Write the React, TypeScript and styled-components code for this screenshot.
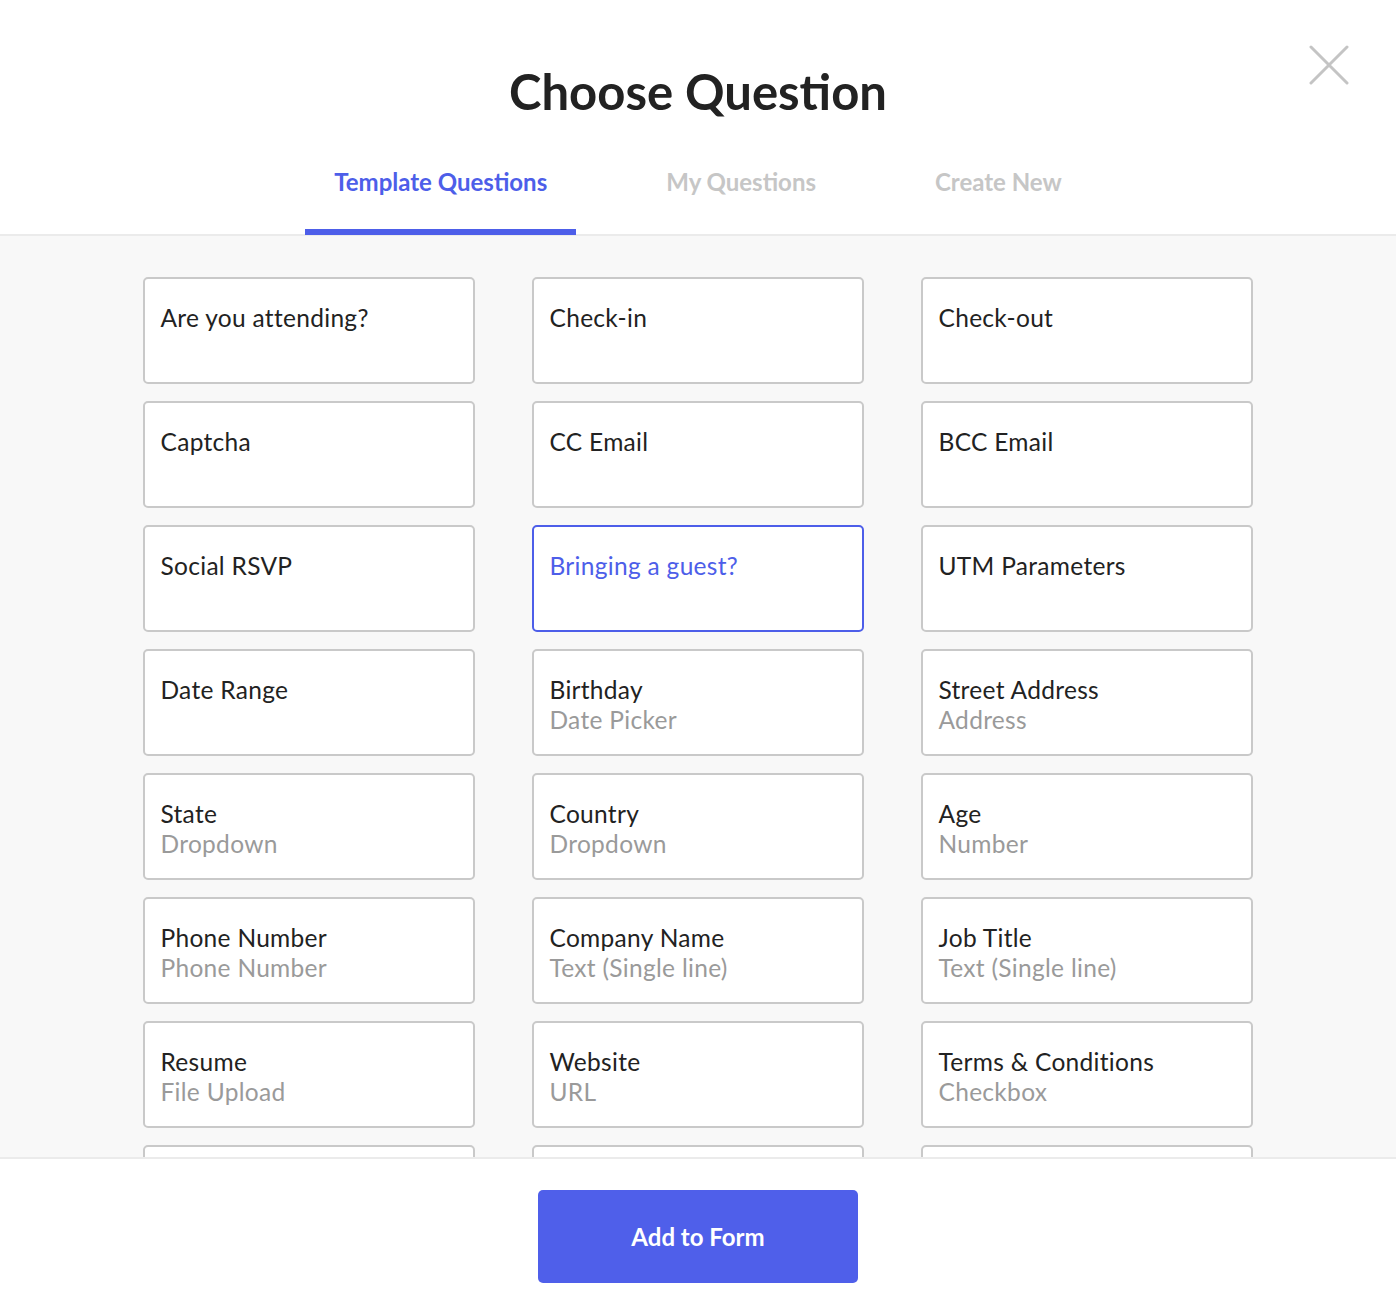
import * as React from 'react';
import styled, { createGlobalStyle } from 'styled-components';

const GlobalStyle = createGlobalStyle`
  html, body {
    margin: 0;
    padding: 0;
    background: #fff;
    font-family: Lato, "Open Sans", Arial, sans-serif;
    color: #222;
  }
  * { box-sizing: border-box; }
`;

interface IQuestion {
  title: string;
  type?: string;
}

const QUESTIONS: IQuestion[] = [
  { title: 'Are you attending?' },
  { title: 'Check-in' },
  { title: 'Check-out' },
  { title: 'Captcha' },
  { title: 'CC Email' },
  { title: 'BCC Email' },
  { title: 'Social RSVP' },
  { title: 'Bringing a guest?' },
  { title: 'UTM Parameters' },
  { title: 'Date Range' },
  { title: 'Birthday', type: 'Date Picker' },
  { title: 'Street Address', type: 'Address' },
  { title: 'State', type: 'Dropdown' },
  { title: 'Country', type: 'Dropdown' },
  { title: 'Age', type: 'Number' },
  { title: 'Phone Number', type: 'Phone Number' },
  { title: 'Company Name', type: 'Text (Single line)' },
  { title: 'Job Title', type: 'Text (Single line)' },
  { title: 'Resume', type: 'File Upload' },
  { title: 'Website', type: 'URL' },
  { title: 'Terms & Conditions', type: 'Checkbox' },
  { title: 'Gender', type: 'Dropdown' },
  { title: 'Dietary Needs', type: 'Checkboxes' },
  { title: 'Comments', type: 'Text (Multi line)' },
];

const TABS = ['Template Questions', 'My Questions', 'Create New'];

export default function App() {
  const [tab, setTab] = React.useState(0);
  const [selected, setSelected] = React.useState('Bringing a guest?');

  return (
    <Page>
      <GlobalStyle />
      <Header>
        <CloseButton aria-label="Close">
          <svg width="40" height="40" viewBox="0 0 40 40">
            <path d="M2 2 L38 38 M38 2 L2 38" stroke="#c4c4c4" strokeWidth="3" strokeLinecap="round" />
          </svg>
        </CloseButton>
        <Title>Choose Question</Title>
        <Tabs>
          {TABS.map((t, i) => (
            <Tab key={t} active={i === tab} onClick={() => setTab(i)}>{t}</Tab>
          ))}
        </Tabs>
      </Header>

      <Body>
        <Grid>
          {QUESTIONS.map(q => (
            <Card key={q.title} selected={q.title === selected} onClick={() => setSelected(q.title)}>
              <CardTitle>{q.title}</CardTitle>
              {q.type && <CardType>{q.type}</CardType>}
            </Card>
          ))}
        </Grid>
      </Body>

      <Footer>
        <AddButton>Add to Form</AddButton>
      </Footer>
    </Page>
  );
}

const Page = styled.div`
  height: 100vh;
  display: flex;
  flex-direction: column;
  overflow: hidden;
`;

const Header = styled.header`
  position: relative;
  flex: none;
  display: flex;
  flex-direction: column;
  align-items: center;
  background: #fff;
  border-bottom: 2px solid #ebebeb;
  padding-top: 60px;
`;

const CloseButton = styled.button`
  position: absolute;
  top: 45px;
  right: 47px;
  width: 40px;
  height: 40px;
  padding: 0;
  border: 0;
  background: none;
  cursor: pointer;
`;

const Title = styled.h1`
  margin: 0;
  font-size: 49px;
  line-height: 62px;
  font-weight: 700;
  color: #222;
`;

const Tabs = styled.nav`
  display: flex;
  gap: 61px;
  margin-top: 40px;
`;

const Tab = styled.div<{ active?: boolean }>`
  padding: 5px 29px 0;
  height: 73px;
  font-size: 24px;
  font-weight: 700;
  line-height: 30px;
  color: ${p => (p.active ? '#4d5ee9' : '#c6c6c6')};
  border-bottom: 6px solid ${p => (p.active ? '#4d5ee9' : 'transparent')};
  cursor: pointer;
  margin-bottom: -1px;
`;

const Body = styled.main`
  flex: 1;
  overflow: hidden;
  background: #f8f8f8;
  padding: 41px 0 0;
`;

const Grid = styled.div`
  width: 1111px;
  margin: 0 auto;
  display: grid;
  grid-template-columns: repeat(3, 332px);
  column-gap: 57px;
  row-gap: 17px;
`;

const Card = styled.div<{ selected?: boolean }>`
  height: 107px;
  background: #fff;
  border: 2px solid ${p => (p.selected ? '#4d5ee9' : '#c9c9c9')};
  border-radius: 5px;
  padding: 24px 16px 0;
  color: ${p => (p.selected ? '#4d5ee9' : '#222')};
  cursor: pointer;
`;

const CardTitle = styled.div`
  font-size: 24.5px;
  line-height: 30px;
  letter-spacing: 0.3px;
`;

const CardType = styled.div`
  font-size: 24.5px;
  line-height: 30px;
  letter-spacing: 0.3px;
  color: #9a9a9a;
`;

const Footer = styled.footer`
  flex: none;
  height: 151px;
  background: #fff;
  border-top: 2px solid #ebebeb;
  display: flex;
  justify-content: center;
  padding-top: 31px;
`;

const AddButton = styled.button`
  width: 320px;
  height: 93px;
  border: 0;
  border-radius: 5px;
  background: #4f5fea;
  color: #fff;
  font-family: Lato, "Open Sans", Arial, sans-serif;
  font-size: 24px;
  font-weight: 700;
  cursor: pointer;
`;
